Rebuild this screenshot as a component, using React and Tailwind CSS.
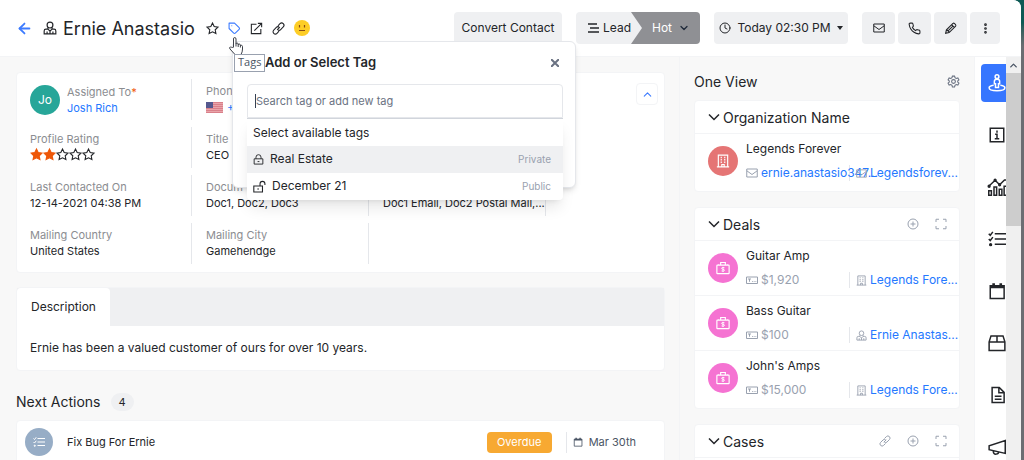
import React, { useState } from 'react';
import clsx from 'clsx';
import { FiArrowLeft, FiChevronDown, FiChevronUp, FiClock, FiMoreVertical, FiPhone, FiTag } from 'react-icons/fi';

const TAGS = [
  { name: 'Real Estate', access: 'Private', locked: true },
  { name: 'December 21', access: 'Public', locked: false },
];

const DEALS = [
  { name: 'Guitar Amp', amount: '$1,920', owner: 'Legends Fore...', icon: 'building' },
  { name: 'Bass Guitar', amount: '$100', owner: 'Ernie Anastas...', icon: 'person' },
  { name: "John's Amps", amount: '$15,000', owner: 'Legends Fore...', icon: 'building' },
];

const RAIL = [
  { icon: 'oneview', label: 'One View' },
  { icon: 'info', label: 'Details' },
  { icon: 'chart', label: 'Reports' },
  { icon: 'tasks', label: 'Activities' },
  { icon: 'calendar', label: 'Calendar' },
  { icon: 'box', label: 'Products' },
  { icon: 'doc', label: 'Documents' },
  { icon: 'megaphone', label: 'Campaigns' },
];

const SHAPES = {
  person: (
    <>
      <circle cx="12" cy="7" r="5" />
      <path d="M8.500 11.500V14M15.500 11.500V14M8.500 14H5q-3 0-3 3v5h20v-5q0-3-3-3h-3.500M8.500 14l3.500 3.500 3.500-3.500M12 17.500V22M7 18v4M17 18v4" />
    </>
  ),
  star: <path d="m12 2 3.100 6.500 7 .9-5.100 4.900 1.300 7.100L12 18l-6.300 3.400L7 14.300 1.900 9.400l7-.9z" />,
  external: <path d="M12 4H2.500v17.500H20V13M8 16 21.500 2.500M14.500 2.500h7v7" />,
  link: (
    <path d="m9.500 14.500 5-5M11 7l3.800-3.800a4.200 4.200 0 0 1 6 6L16 14a4.200 4.200 0 0 1-5 .8M13 17l-3.800 3.800a4.200 4.200 0 0 1-6-6L8 10a4.200 4.200 0 0 1 5-.8" />
  ),
  pencil: <path d="m3 21 1.500-6.500L16.500 2.500q1.500-1 3 .5l1.500 1.500q1.500 1.500.5 3L9.500 19.500zM14 5l5 5M5 14l5 5M8 16l8-8" />,
  building: (
    <>
      <path d="M4 22V2h16v20M1.500 22h21M10 22v-4h4v4" />
      <path d="M8 6h2M14 6h2M8 10h2M14 10h2M8 14h2M14 14h2" strokeWidth="2.500" />
    </>
  ),
  case: (
    <>
      <rect x="1.500" y="7" width="21" height="14.500" rx="1" />
      <path d="M8 7V2.500h8V7M4.500 7v-1M19.500 7v-1" />
      <path d="M14.500 11.500q-5-1.500-5 1 0 1.500 2.500 1.700t2.500 1.800q0 2.500-5 1M12 10v9" strokeWidth="1.500" />
    </>
  ),
  amount: (
    <>
      <path d="M1 6h22v13H1z" />
      <path d="M4 10h6M7 10v5.500M12 15h1.500M15.500 15H17M19 15h1.500" />
    </>
  ),
  gear: (
    <>
      <path d="M10 2h4l.8 3 2.200 1.300 3-.8 2 3.400L19.800 11v2l2.200 2.100-2 3.400-3-.8-2.200 1.300-.8 3h-4l-.8-3L7 17.700l-3 .8-2-3.400L4.200 13v-2L2 8.900l2-3.400 3 .8L9.200 5z" />
      <circle cx="12" cy="12" r="3.500" />
    </>
  ),
  plus: (
    <>
      <circle cx="12" cy="12" r="10" />
      <path d="M12 7v10M7 12h10" />
    </>
  ),
  expand: <path d="M2 8V2.500h6M16 2.500h6V8M22 16v5.500h-6M8 21.500H2V16" />,
  lock: <path d="M2.500 10.500h19V22h-19zM6.500 10.500V7a5.500 5.500 0 0 1 11 0v3.500M10 16.500h4" />,
  unlock: <path d="M1.500 11h16v11h-16zM13 11V7a4.500 4.500 0 0 1 9 0v2M8 16.500h3" />,
  mail: <path d="M1.500 4h21v16h-21zM1.500 7.500 12 15l10.500-7.500" />,
  tasks: (
    <>
      <path d="M9 5h15M9 12h15M9 19h15" />
      <path d="m1 5 2 2 3.500-4.500M1 12l2 2 3.500-4.500" />
      <circle cx="3.500" cy="19.500" r="1.200" fill="currentColor" />
    </>
  ),
  calendar: (
    <>
      <path d="M3 5h18.500v17H3z" />
      <path d="M3 6.500h18.500M7.500 1.500V5M17 1.500V5" strokeWidth="3.500" />
    </>
  ),
  oneview: (
    <>
      <circle cx="12" cy="3.500" r="2.500" />
      <path d="M10 18v-5H8.500V9.500Q8.500 7 12 7t3.500 2.500V13H14v5z" />
      <path d="M7.500 15c-3.500.6-6 1.700-6 3.200 0 2.300 4.500 4 10.500 4s10.500-1.700 10.500-4c0-1.500-2.500-2.600-6-3.200" />
    </>
  ),
  info: (
    <>
      <path d="M3 3h18v18H3z" />
      <path d="M9.500 11H12v5.500M9 17h6" />
      <path d="M11 7.500h2" strokeWidth="3" />
    </>
  ),
  chart: (
    <>
      <path d="M1 17h3.500v6H1zM8 12h3.500v11H8zM15 15h3.500v8H15zM21.500 11H25v12h-3.500z" />
      <path d="m1 11 8.500-8 6 6L22 2.500h3" />
      <circle cx="9.500" cy="3" r="1.200" fill="currentColor" />
      <circle cx="15.500" cy="9" r="1.200" fill="currentColor" />
      <circle cx="1.500" cy="11" r="1.200" fill="currentColor" />
    </>
  ),
  box: <path d="M1.500 10.500 4 2.500h16l2.500 8v11.500h-21zM1.500 10.500h21M12 2.500v8" />,
  doc: <path d="M5.500 2h9.500L21.500 8.500V22h-16zM14.500 2v7h7M9 13.500h9M9 17.500h9" />,
  megaphone: <path d="M1.500 10.500v5L23 20.500V3.500zM7 17q0 5 4 4.500 3.500-.5 3-3" />,
};

function Icon({ name, className, stroke = 2, fill = 'none' }) {
  return (
    <svg
      viewBox="0 0 24 24"
      className={clsx('shrink-0 overflow-visible', className)}
      fill={fill}
      stroke="currentColor"
      strokeWidth={stroke}
      aria-hidden="true"
    >
      {SHAPES[name]}
    </svg>
  );
}

function Field({ label, children }) {
  return (
    <div className="h-[41px] min-w-0 border-r border-gray-200 pt-1">
      <div className="truncate leading-4 text-[#8b8d91]">{label}</div>
      <div className="truncate leading-4">{children}</div>
    </div>
  );
}

function ToolButton({ label, children }) {
  return (
    <button aria-label={label} className="flex h-8 w-[33px] items-center justify-center rounded bg-[#eff0f2]">
      {children}
    </button>
  );
}

function TagPopover({ onClose }) {
  const [query, setQuery] = useState('');

  return (
    <div
      role="dialog"
      aria-label="Add or Select Tag"
      className="absolute left-1 top-[19px] z-20 h-[147px] w-[344px] rounded-md border border-gray-200 bg-white pl-3.5 pr-3 shadow-md"
    >
      <div className="flex h-[42px] items-center justify-between pl-[18px]">
        <h2 className="text-[13px] font-semibold">Add or Select Tag</h2>
        <button aria-label="Close" onClick={onClose} className="p-1 text-gray-500">
          <svg viewBox="0 0 8 8" className="size-2" stroke="currentColor" strokeWidth="2">
            <path d="m0 0 8 8M8 0 0 8" />
          </svg>
        </button>
      </div>
      <div className="relative">
        <input
          aria-label="Search tag or add new tag"
          placeholder="Search tag or add new tag"
          value={query}
          onChange={(event) => setQuery(event.target.value)}
          className="h-[34px] w-full rounded-t border border-gray-200 px-2 text-[11px] outline-none placeholder:text-gray-500"
        />
        <span className="absolute left-2 top-2.5 h-3.5 w-px bg-gray-700" />
        <div className="absolute inset-x-0 top-full rounded-b border-t border-gray-300 bg-white shadow-lg">
          <div className="h-[27px] px-1.5 text-[12px] leading-[27px]">Select available tags</div>
          {TAGS.map((tag) => (
            <button
              key={tag.name}
              className={clsx('flex h-[27px] w-full items-center gap-1.5 px-1.5 text-[12px]', tag.locked && 'bg-[#eff0f2]')}
            >
              <Icon name={tag.locked ? 'lock' : 'unlock'} className={tag.locked ? 'size-[11px]' : 'size-[13px]'} />
              {tag.name}
              <span className="ml-auto pr-1.5 text-[10px] text-gray-400">{tag.access}</span>
            </button>
          ))}
        </div>
      </div>
    </div>
  );
}

function Header() {
  const [open, setOpen] = useState(true);

  return (
    <header className="flex h-[57px] shrink-0 items-center border-b border-gray-100 bg-white pl-4 pr-[21px]">
      <button aria-label="Back" className="text-[#3c7bff]">
        <FiArrowLeft size={17} strokeWidth={2.5} />
      </button>
      <Icon name="person" className="ml-2.5 size-3.5" />
      <h1 className="ml-1.5 w-[137px] whitespace-nowrap text-[18px]">Ernie Anastasio</h1>
      <div className="ml-1.5 flex items-center gap-[9px]">
        <button aria-label="Favorite">
          <Icon name="star" className="size-[13px]" />
        </button>
        <div className="relative">
          <button aria-label="Tags" onClick={() => setOpen(!open)} className="block text-[#3c7bff]">
            <FiTag size={13} />
          </button>
          {open && <TagPopover onClose={() => setOpen(false)} />}
          <svg viewBox="0 0 14 18" className="absolute left-px top-[15px] z-30 h-[18px] w-3.5" fill="#fff" stroke="#3d4048">
            <path d="M4.500 10V2q0-1.500 1.200-1.500T7 2v5q0-1 1-1t1.200 1v1q0-1 1-1t1.200 1v1q.3-.8 1.100-.7t1 1V12q0 3-1.500 5.500h-6L1 12q-1-1.500.3-2t2.200 1z" />
            <path d="M7 7v2.500M9.200 8v2M11.400 9v1.500" />
          </svg>
          <span
            role="tooltip"
            className="absolute left-1.5 top-8 z-30 flex h-[18px] items-center border border-gray-400 bg-white px-[3px] font-['Open_Sans',sans-serif] text-[11px] text-gray-600"
          >
            Tags
          </span>
        </div>
        <button aria-label="Open in new window">
          <Icon name="external" className="size-[13px]" />
        </button>
        <button aria-label="Copy link">
          <Icon name="link" className="size-[13px]" />
        </button>
        <svg viewBox="0 0 16 16" className="size-4" role="img" aria-label="Neutral">
          <circle cx="8" cy="8" r="8" fill="#fdcd26" />
          <path d="M5.500 5v2.500M10.500 5v2.500M5 10.500h6" stroke="#8a4b16" strokeWidth="1.200" />
        </svg>
      </div>

      <div className="ml-auto flex items-center text-[12px] whitespace-nowrap">
        <button className="mr-3.5 h-8 w-[108px] rounded bg-[#eff0f2]">Convert Contact</button>
        <div className="mr-3.5 flex h-8 w-[124px] overflow-hidden rounded">
          <button className="flex w-[55px] shrink-0 items-center gap-1 bg-[#eff0f2] pl-3">
            <svg viewBox="0 0 11 10" className="h-2.5 w-[11px] shrink-0" stroke="currentColor" strokeWidth="1.500">
              <path d="M0 1h9M2 5h9M0 9h11" />
            </svg>
            Lead
          </button>
          <button className="flex flex-1 items-center bg-[#8f9094] text-white">
            <svg viewBox="0 0 11 32" className="mr-2.5 h-8 w-[11px]" fill="#eff0f2">
              <path d="M0 0 11 16 0 32z" />
            </svg>
            Hot
            <FiChevronDown size={12} strokeWidth={2.5} className="ml-1.5 text-gray-800" />
          </button>
        </div>
        <button className="mr-3.5 flex h-8 w-[134px] items-center justify-center gap-1.5 rounded bg-[#eff0f2]">
          <FiClock size={12} />
          Today 02:30 PM
          <svg viewBox="0 0 6 4" className="h-1 w-1.5" fill="currentColor">
            <path d="M0 0h6L3 4z" />
          </svg>
        </button>
        <div className="flex gap-[3px]">
          <ToolButton label="Email">
            <Icon name="mail" className="size-3" />
          </ToolButton>
          <ToolButton label="Call">
            <FiPhone size={13} />
          </ToolButton>
          <ToolButton label="Edit">
            <Icon name="pencil" className="size-[13px]" />
          </ToolButton>
          <button aria-label="More" className="flex h-8 w-[30px] items-center justify-center rounded bg-[#eff0f2]">
            <FiMoreVertical size={13} strokeWidth={3} />
          </button>
        </div>
      </div>
    </header>
  );
}

function Details() {
  return (
    <section className="relative grid grid-cols-[162fr_177fr_177fr_118fr] gap-y-[7px] rounded border border-gray-100 bg-white pb-2 pl-[13px] pt-1.5 text-[11px]">
      <div className="flex h-[41px] items-center gap-[7px] border-r border-gray-200">
        <span className="flex size-[30px] items-center justify-center rounded-full bg-[#27a699] text-[12px] text-white">Jo</span>
        <div className="leading-4">
          <div className="text-[#8b8d91]">
            Assigned To<span className="text-[#f0560c]">*</span>
          </div>
          <a href="#josh" className="text-[#2478ff]">Josh Rich</a>
        </div>
      </div>
      <div className="pl-3.5">
        <Field label="Phone">
          <a href="#call" className="flex items-center gap-1 text-[#2478ff]">
            <svg viewBox="0 0 17 11" className="h-[11px] w-[17px]">
              <path d="M0 0h17v11H0z" fill="#e9a4aa" />
              <path d="M0 .5h17M0 2.500h17M0 4.500h17M0 6.500h17M0 8.500h17M0 10.500h17" stroke="#d9808a" />
              <path d="M0 0h7v6H0z" fill="#55588e" />
            </svg>
            +
          </a>
        </Field>
      </div>
      <div className="col-span-2" />

      <Field label="Profile Rating">
        <div className="flex pt-px">
          {[1, 2, 3, 4, 5].map((value) => (
            <Icon
              key={value}
              name="star"
              fill={value <= 2 ? 'currentColor' : 'none'}
              className={clsx('size-[13px]', value <= 2 && 'text-[#ee5708]')}
            />
          ))}
        </div>
      </Field>
      <div className="pl-3.5">
        <Field label="Title">CEO</Field>
      </div>
      <div className="col-span-2" />

      <Field label="Last Contacted On">12-14-2021 04:38 PM</Field>
      <div className="pl-3.5">
        <Field label="Docum">Doc1, Doc2, Doc3</Field>
      </div>
      <div className="pl-3.5">
        <Field label={'\u00a0'}>Doc1 Email, Doc2 Postal Mail,...</Field>
      </div>
      <div />

      <Field label="Mailing Country">United States</Field>
      <div className="pl-3.5">
        <Field label="Mailing City">Gamehendge</Field>
      </div>
      <button
        aria-label="Collapse"
        className="absolute right-1.5 top-2.5 flex size-[22px] items-center justify-center rounded border border-gray-100 text-[#3c7bff]"
      >
        <FiChevronUp size={13} />
      </button>
    </section>
  );
}

function Panel({ title, actions, children }) {
  return (
    <section className="mb-[15px] rounded border border-gray-100 bg-white">
      <div className="flex h-[33px] items-center border-b border-gray-100 pl-[13px] pr-3">
        <svg viewBox="0 0 12 7" className="mr-[3px] h-[7px] w-3" fill="none" stroke="currentColor" strokeWidth="1.500">
          <path d="m1 .5 5 5 5-5" />
        </svg>
        <h3 className="text-[14px]">{title}</h3>
        <div className="ml-auto flex gap-4 text-gray-400">
          {actions?.map((action) => (
            <button key={action} aria-label={action}>
              <Icon name={action} className="size-3" />
            </button>
          ))}
        </div>
      </div>
      {children}
    </section>
  );
}

function Record({ name, round, tone, left, right }) {
  return (
    <div className="flex h-[55px] gap-2 border-b border-gray-100 pl-[13px] last:h-[57px] last:border-0">
      <span className={clsx('mt-3 flex size-[30px] shrink-0 items-center justify-center rounded-full text-white', tone)}>
        <Icon name={round} className="size-3.5" />
      </span>
      <div className="min-w-0 flex-1 pt-[7px] text-[12px]">
        <div className="leading-4">{name}</div>
        <div className="mt-2 flex h-4 whitespace-nowrap leading-4">
          <div className="flex w-[104px] shrink-0 items-center gap-[3px] border-r border-gray-200 text-gray-400">{left}</div>
          <div className="flex items-center gap-[3px] pl-1.5 text-gray-400">{right}</div>
        </div>
      </div>
    </div>
  );
}

function OneView() {
  return (
    <aside className="w-[295px] shrink-0 overflow-hidden border-l border-gray-100 px-3.5">
      <div className="flex h-[43px] items-center justify-between pt-1.5">
        <h2 className="text-[14px]">One View</h2>
        <button aria-label="Settings" className="text-gray-500">
          <Icon name="gear" className="size-[13px]" />
        </button>
      </div>
      <Panel title="Organization Name">
        <Record
          name="Legends Forever"
          round="building"
          tone="bg-[#e57575]"
          left={
            <>
              <Icon name="mail" className="size-3" />
              <a href="#mail" className="text-[#2478ff]">ernie.anastasio347...</a>
            </>
          }
          right={
            <>
              <Icon name="mail" className="size-[11px]" />
              <a href="#site" className="text-[#2478ff]">Legendsforev...</a>
            </>
          }
        />
      </Panel>
      <Panel title="Deals" actions={['plus', 'expand']}>
        {DEALS.map((deal) => (
          <Record
            key={deal.name}
            name={deal.name}
            round="case"
            tone="bg-[#f573d2]"
            left={
              <>
                <Icon name="amount" className="size-3" />
                {deal.amount}
              </>
            }
            right={
              <>
                <Icon name={deal.icon} className="size-[11px]" />
                <a href="#owner" className="text-[#2478ff]">{deal.owner}</a>
              </>
            }
          />
        ))}
      </Panel>
      <Panel title="Cases" actions={['link', 'plus', 'expand']}>
        <div className="h-12" />
      </Panel>
    </aside>
  );
}

export default function App() {
  return (
    <div className="h-screen overflow-hidden bg-linear-to-b from-[#0d5a55] from-5% to-[#6b6d72] to-10% pr-[3px] font-[Inter,sans-serif] text-[#232529]">
      <div className="flex h-full flex-col overflow-hidden rounded-tr-lg bg-[#f8f8f8]">
        <Header />
        <div className="flex min-h-0 flex-1">
          <main className="min-w-0 flex-1 overflow-hidden pl-4 pr-3.5 pt-[15px]">
            <Details />

            <section className="mt-3.5 rounded border border-gray-100 bg-white">
              <div role="tablist" className="flex h-[38px] bg-[#eff0f2]">
                <button role="tab" aria-selected="true" className="rounded-t bg-white px-3.5 text-[12px]">
                  Description
                </button>
              </div>
              <p className="px-[13px] py-3.5 text-[12px] leading-4">Ernie has been a valued customer of ours for over 10 years.</p>
            </section>

            <div className="mt-[21px] flex items-center gap-2.5">
              <h2 className="text-[14px] leading-5">Next Actions</h2>
              <span className="flex h-[18px] items-center rounded-full bg-[#eff0f2] px-2 text-[11px]">4</span>
            </div>
            <section className="mt-2 flex h-11 items-center rounded border border-gray-100 bg-white pl-2 pr-7 text-[11px]">
              <span className="flex size-7 items-center justify-center rounded-full bg-[#97adc6] text-white">
                <Icon name="tasks" className="size-3" />
              </span>
              <span className="ml-3.5">Fix Bug For Ernie</span>
              <span className="ml-auto flex h-[21px] w-[65px] items-center justify-center rounded bg-[#f7a932] text-white">Overdue</span>
              <span className="ml-3.5 flex h-[21px] items-center gap-1.5 border-l border-gray-200 pl-1.5 text-gray-600">
                <Icon name="calendar" className="size-2.5" />
                Mar 30th
              </span>
            </section>
          </main>

          <OneView />

          <nav className="flex w-8 shrink-0 flex-col gap-3.5 overflow-hidden border-l border-gray-100 bg-white pl-1.5 pt-[7px]">
            {RAIL.map((item, index) => (
              <button
                key={item.icon}
                aria-label={item.label}
                className={clsx('flex h-[38px] w-full shrink-0 items-center rounded-l pl-[7px]', index === 0 && 'bg-[#3676ff] text-white')}
              >
                <Icon name={item.icon} className="size-[18px]" />
              </button>
            ))}
          </nav>

          <div className="w-[15px] shrink-0 bg-[#f0f0f0]">
            <div className="flex h-4 items-center justify-center text-gray-600">
              <FiChevronUp size={11} strokeWidth={3} />
            </div>
            <div className="h-[153px] bg-[#cdcdcd]" />
          </div>
        </div>
      </div>
    </div>
  );
}
